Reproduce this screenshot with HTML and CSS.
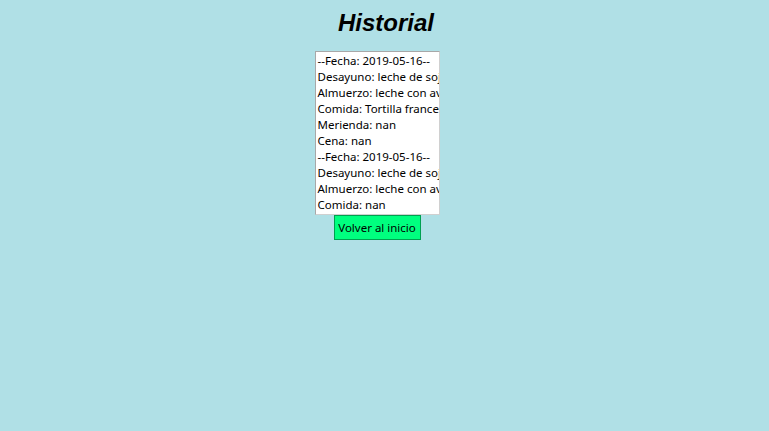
FILE: index.html
```html
<!DOCTYPE html>
<html lang="es">
<head>
<meta charset="utf-8">
<title>Historial</title>
<link rel="stylesheet" href="styles.css">
</head>
<body>
<div class="page">
  <h1 class="title">Historial</h1>
  <div class="panel">
    <div class="listbox">
      <div class="row">--Fecha: 2019-05-16--</div>
      <div class="row">Desayuno: leche de soja</div>
      <div class="row">Almuerzo: leche con avena</div>
      <div class="row">Comida: Tortilla francesa</div>
      <div class="row">Merienda: nan</div>
      <div class="row">Cena: nan</div>
      <div class="row">--Fecha: 2019-05-16--</div>
      <div class="row">Desayuno: leche de soja</div>
      <div class="row">Almuerzo: leche con avena</div>
      <div class="row">Comida: nan</div>
    </div>
    <button class="btn" type="button">Volver al inicio</button>
  </div>
</div>
</body>
</html>
```

FILE: styles.css
```css
html, body {
  margin: 0;
  padding: 0;
  background: #b0e0e6;
}
.page {
  display: flex;
  flex-direction: column;
  align-items: center;
  padding-top: 9px;
}
.title {
  margin: 0 0 0 3px;
  font-family: "Liberation Sans", Arial, sans-serif;
  font-weight: bold;
  font-style: italic;
  font-size: 24px;
  line-height: 28px;
  color: #000;
}
.panel {
  display: flex;
  flex-direction: column;
  align-items: center;
  margin-top: 14px;
  margin-right: 15px;
}
.listbox {
  width: 121px;
  height: 161px;
  background: #fff;
  border: 1px solid #d0d0d0;
  border-top-color: #a8a8a8;
  border-left-color: #a8a8a8;
  padding: 1px 0 0 2px;
  overflow: hidden;
  font-family: "Noto Sans", Tahoma, sans-serif;
  font-size: 11.5px;
  color: #000;
}
.row {
  height: 16px;
  line-height: 16px;
  white-space: nowrap;
}
.btn {
  margin-top: 0;
  width: 87px;
  height: 25px;
  padding: 0;
  background: #00ff7f;
  border: 1px solid #00a050;
  font-family: "Noto Sans", Tahoma, sans-serif;
  font-size: 11.5px;
  color: #000;
}
```
